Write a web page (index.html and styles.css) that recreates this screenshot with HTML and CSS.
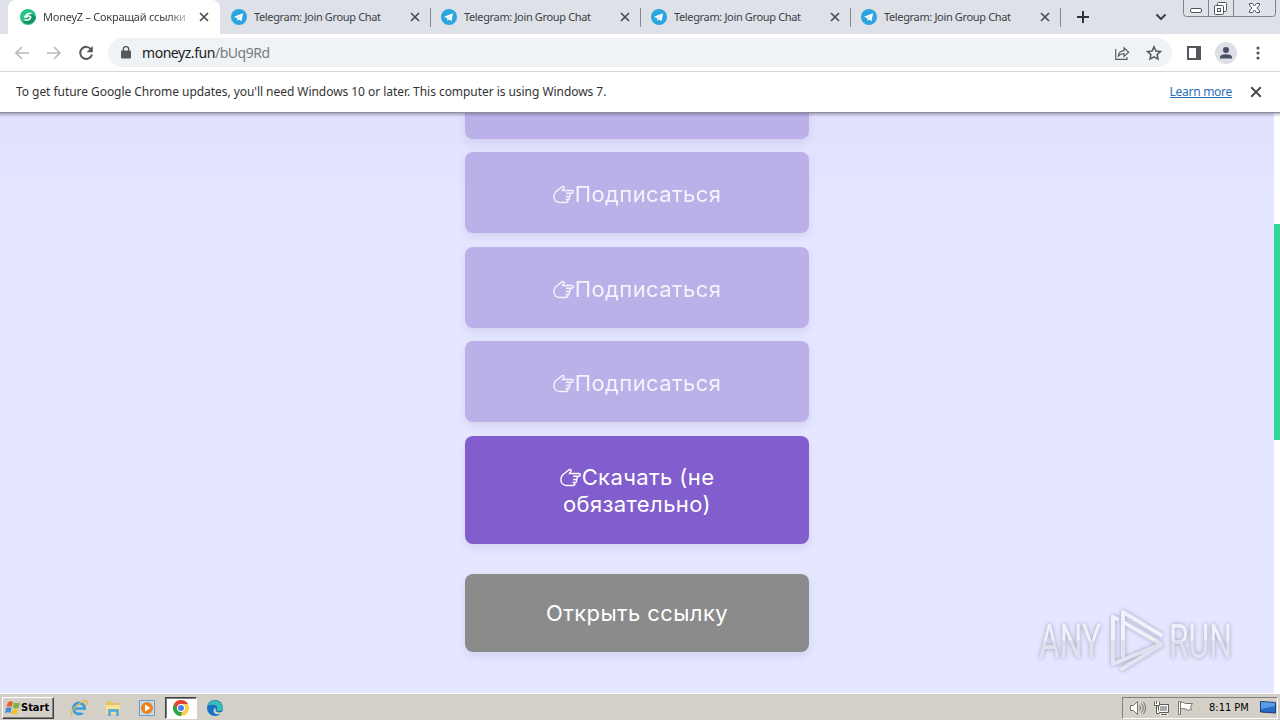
FILE: index.html
```html
<!DOCTYPE html>
<html lang="ru">
<head>
    <meta charset="UTF-8">
    <title>MoneyZ – Сокращай ссылки</title>
    <link rel="stylesheet" href="styles.css">
</head>
<body>
    <!-- shared icons -->
    <svg class="defs" width="0" height="0">
        <symbol id="telegram" viewBox="0 0 16 16">
            <circle cx="8" cy="8" r="8" fill="#2aa5df"/>
            <path d="M3 7.8l9-3.6-1.5 8-2.6-1.8-1.4 1.3-.3-2.4z" fill="#fff"/>
            <path d="M6.2 9.3l4.2-3.5-3.2 4.1-.7 1.8z" fill="#b9dcf0"/>
        </symbol>
        <symbol id="close" viewBox="0 0 10 10">
            <path d="M1 1l8 8M9 1L1 9" stroke="#45494d" stroke-width="1.6"/>
        </symbol>
        <symbol id="hand" viewBox="0 0 21 19">
            <path d="M8 17.500Q3 17.500 1.500 14.500Q0 10.500 2.500 7L9.500 1.500Q11.500 1 11 3L9.500 5.500H19q1.300 0 1.300 1.300T19 8.200h-6M17 8.500q1 3-1.500 3H13M16.500 11.700q.5 2.800-1.500 2.800h-2.500M15 14.700q0 2.800-2 2.800H8" fill="none" stroke="#fff" stroke-width="1.400"/>
        </symbol>
    </svg>

    <div class="tab-strip">
        <div class="tab active">
            <svg class="favicon" viewBox="0 0 16 16"><circle cx="8" cy="8" r="8" fill="#22c584"/><path d="M3 13A8 8 0 0 0 16 8L11 4z" fill="#159263"/><path d="M11.5 4.5H8L5.5 7H9q2 0 1.5 1.8T8 11H4.5M4 8h4" fill="none" stroke="#fff" stroke-width="1.7"/></svg>
            <span class="tab-title">MoneyZ – Сокращай ссылки</span>
            <svg class="tab-close"><use href="#close"/></svg>
        </div>
        <div class="tab">
            <svg class="favicon"><use href="#telegram"/></svg>
            <span class="tab-title">Telegram: Join Group Chat</span>
            <svg class="tab-close"><use href="#close"/></svg>
        </div>
        <div class="tab">
            <svg class="favicon"><use href="#telegram"/></svg>
            <span class="tab-title">Telegram: Join Group Chat</span>
            <svg class="tab-close"><use href="#close"/></svg>
        </div>
        <div class="tab">
            <svg class="favicon"><use href="#telegram"/></svg>
            <span class="tab-title">Telegram: Join Group Chat</span>
            <svg class="tab-close"><use href="#close"/></svg>
        </div>
        <div class="tab">
            <svg class="favicon"><use href="#telegram"/></svg>
            <span class="tab-title">Telegram: Join Group Chat</span>
            <svg class="tab-close"><use href="#close"/></svg>
        </div>
        <svg class="new-tab" width="12" height="12"><path d="M6 0v12M0 6h12" stroke="#30343a" stroke-width="2"/></svg>
        <svg class="tab-search" width="12" height="8"><path d="M1.5 1.5L6 6l4.5-4.5" fill="none" stroke="#3c4045" stroke-width="2"/></svg>
        <svg class="window-buttons" width="94" height="17" viewBox="0 0 94 17" fill="none" stroke="#7d828b">
            <path d="M.5-1V13.500q0 3 3 3H89.500q3 0 3-3V-1" fill="#dfe2e8"/>
            <path d="M25.500 0v16M50.500 0v16"/>
            <g stroke="#50545c">
                <rect x="7.500" y="8.500" width="11" height="4" rx="1.500" fill="#fff"/>
                <rect x="34.500" y="2.500" width="9" height="9" rx="1" fill="#fff"/>
                <rect x="31.500" y="5.500" width="9" height="9" rx="1" fill="#fff"/>
                <rect x="34.500" y="8.500" width="3" height="3"/>
                <path d="M66.500 3.500h3l2 2.500 2-2.500h3V5l-2.500 3 2.500 3v1.500h-3l-2-2.500-2 2.500h-3V11L69 8l-2.500-3z" fill="#fff"/>
            </g>
        </svg>
    </div>

    <div class="toolbar">
        <svg class="nav-icon" viewBox="0 0 16 16"><path d="M15 8H2M8 2L2 8l6 6" fill="none" stroke="#b8babd" stroke-width="1.700"/></svg>
        <svg class="nav-icon" viewBox="0 0 16 16"><path d="M1 8h13M8 2l6 6-6 6" fill="none" stroke="#b8babd" stroke-width="1.700"/></svg>
        <svg class="nav-icon" viewBox="0 0 16 16"><path d="M13.200 4.500A6 6 0 1 0 14 9.500" fill="none" stroke="#54585d" stroke-width="2"/><path d="M14.800 1v6.200H8.600z" fill="#54585d"/></svg>
        <div class="address-bar">
            <svg width="10" height="13" viewBox="0 0 10 13"><rect y="4.500" width="10" height="8" rx="1" fill="#54585d"/><path d="M2.300 5V3.300a2.700 2.700 0 0 1 5.400 0V5" fill="none" stroke="#54585d" stroke-width="1.400"/></svg>
            <span class="url"><b>moneyz.fun</b>/bUq9Rd</span>
            <svg class="share" width="16" height="16" viewBox="0 0 16 16" fill="none" stroke="#5b5f64" stroke-width="1.200"><path d="M1.700 4v10.300H13V12"/><path d="M4.300 11q.5-5 5.700-5.300V2.800l4.700 4.400L10 11.500V8.700Q6.500 8.500 4.300 11z"/></svg>
            <svg width="16" height="16" viewBox="0 0 16 16" fill="none" stroke="#54585d" stroke-width="1.500"><path d="M8 1.800l1.900 4.200 4.600.5-3.400 3.100.9 4.500L8 11.800l-4 2.300.9-4.500-3.400-3.100 4.600-.5z"/></svg>
        </div>
        <svg class="side-panel" width="14" height="14"><rect x="1" y="1" width="12" height="12" fill="#fff" stroke="#54585d" stroke-width="2"/><path d="M9 1h4v12H9z" fill="#54585d"/></svg>
        <svg class="profile" width="22" height="22"><circle cx="11" cy="11" r="11" fill="#dcdfe5"/><circle cx="11" cy="8" r="3" fill="#485068"/><path d="M5 16.500v-1.200q0-3 6-3t6 3v1.200z" fill="#485068"/></svg>
        <svg class="menu" width="4" height="14" fill="#54585d"><circle cx="2" cy="2" r="1.600"/><circle cx="2" cy="7" r="1.600"/><circle cx="2" cy="12" r="1.600"/></svg>
    </div>

    <div class="infobar">
        <span class="message">To get future Google Chrome updates, you'll need Windows 10 or later. This computer is using Windows 7.</span>
        <a class="learn-more">Learn more</a>
        <svg class="infobar-close" width="12" height="12"><use href="#close"/></svg>
    </div>

    <div class="page">
        <div class="links">
            <div class="btn locked"></div>
            <div class="btn locked"><span><svg class="hand"><use href="#hand"/></svg>Подписаться</span></div>
            <div class="btn locked"><span><svg class="hand"><use href="#hand"/></svg>Подписаться</span></div>
            <div class="btn locked"><span><svg class="hand"><use href="#hand"/></svg>Подписаться</span></div>
            <div class="btn download"><span><svg class="hand"><use href="#hand"/></svg>Скачать (не<br>обязательно)</span></div>
            <div class="btn open"><span>Открыть ссылку</span></div>
        </div>
        <div class="scrollbar"><div class="thumb"></div></div>
        <svg class="watermark" width="214" height="74" viewBox="0 0 214 74">
            <defs>
                <linearGradient id="shine" x1="0" y1="0" x2="0" y2="70" gradientUnits="userSpaceOnUse">
                    <stop offset=".5" stop-color="#f1f1fb"/>
                    <stop offset=".52" stop-color="#dfdfed"/>
                    <stop offset="1" stop-color="#e8e8f5"/>
                </linearGradient>
            </defs>
            <g fill="url(#shine)">
                <text x="5" y="53" textLength="62" lengthAdjust="spacingAndGlyphs">ANY</text>
                <text x="135" y="53" textLength="63" lengthAdjust="spacingAndGlyphs">RUN</text>
            </g>
            <path d="M83 14l-4-2v47l48-20L89 17M89 51V7l38 23M127 40L88 64" fill="none" stroke="url(#shine)" stroke-width="4" stroke-linejoin="round" stroke-linecap="round"/>
        </svg>
    </div>

    <div class="taskbar">
        <div class="start">
            <svg width="16" height="16" viewBox="0 0 16 16"><path d="M3 2q3-1.500 5 0L7 7Q5 5.500 1.500 7z" fill="#e8622c"/><path d="M9 2.500q3 1.500 6 0L13.500 8Q11 9 8 7.500z" fill="#7cb342"/><path d="M1.200 8q3-1.500 5.300 0L5.500 13Q3 11.500 0 13z" fill="#3c8ed8"/><path d="M7.600 8.500q3 1.500 5.600.5L12 14q-3 1-5.500-.5z" fill="#f6c12c"/></svg>
            <span>Start</span>
        </div>
        <div class="launchers">
            <div class="task"><svg viewBox="0 0 18 18"><circle cx="9" cy="9.500" r="5.500" fill="none" stroke="#3b9ede" stroke-width="3"/><path d="M5 9.500h9" stroke="#3b9ede" stroke-width="2.500"/><path d="M11 11h6v3h-6z" fill="#d4d0c8"/><path d="M2 16.500Q-1 13 7 6.500T17 2.500q.5 1.500-1.500 4" fill="none" stroke="#e5bb3c" stroke-width="1.300"/></svg></div>
            <div class="task"><svg viewBox="0 0 18 18"><path d="M2 3l5-1 1 2h8v8H2z" fill="#e4c467"/><path d="M2 6h14v9H2z" fill="#f5e391"/><path d="M4 17v-6q0-1 1-1h9q1 0 1 1v6h-3v-4H7v4z" fill="#62aeda"/></svg></div>
            <div class="task"><svg viewBox="0 0 18 18"><path d="M1.500 1.500h15v15h-15z" fill="#c8dcee" stroke="#6b9ac8"/><circle cx="9" cy="9" r="6" fill="#ee8020"/><path d="M7 5.500l5.500 3.500L7 12.500z" fill="#fff"/></svg></div>
            <div class="task current"><svg viewBox="0 0 18 18"><circle cx="9" cy="9" r="8" fill="#ffcd40"/><path d="M2.070 5A8 8 0 0 1 15.930 5H9L5.500 11z" fill="#e34133"/><path d="M2.070 5L6 11.500 10 12.500 9 17A8 8 0 0 1 2.070 5z" fill="#2ba24c"/><circle cx="9" cy="9" r="4" fill="#fff"/><circle cx="9" cy="9" r="3" fill="#4285f4"/></svg></div>
            <div class="task"><svg viewBox="0 0 18 18"><circle cx="9" cy="9" r="8" fill="#1673c6"/><path d="M1.500 7A8 8 0 0 1 17 9q0 3-4 3-3 0-2-2 1-4-3-4-4-1-6.500 1z" fill="#38bfb5"/><path d="M10 9q-2 4 3 4.500l3-.5 1 1-3 1Q8 16 7.500 12q0-3 2.500-3z" fill="#d4d0c8"/></svg></div>
        </div>
        <div class="tray">
            <svg width="17" height="16" viewBox="0 0 17 16" fill="none" stroke="#77736d"><path d="M1.500 5.500h3l4-4v13l-4-4h-3z" fill="#fff"/><path d="M10.500 5.500q2 2.500 0 5M12.500 3.500q3.500 4.500 0 9M14.500 2q4 6 0 12"/></svg>
            <svg width="17" height="16" viewBox="0 0 17 16" fill="none" stroke="#5f5c57"><path d="M5.500 4.500h10v8h-10z" fill="#aaa"/><path d="M6.500 5.500h8v6h-8z" stroke="#fff"/><path d="M1.500 1.500v4h5v-4M3.500 1v3M3.500 5.500v8h3" fill="#fff"/><path d="M7 14.500h8" stroke="#fff" stroke-width="2"/><path d="M8 14.500h6"/></svg>
            <svg width="17" height="16" viewBox="0 0 17 16" stroke="#77736d"><path d="M1.500 1.500h2v13h-2z" fill="#fff"/><path d="M3.500 2.500q3-1 5 1h7l-2 3 1 3q-4 2-6-.5-2-1-5 0z" fill="#fff"/></svg>
            <span class="clock">8:11 PM</span>
            <svg class="show-desktop" width="16" height="13" viewBox="0 0 16 13"><path d="M.5.500l15 1V12L.5 11z" fill="#276dc5" stroke="#1d3f75"/><path d="M1 1l14 1v3L1 8z" fill="#5b9be5"/></svg>
        </div>
    </div>
</body>
</html>
```
FILE: styles.css
```css
* {
    box-sizing: border-box;
}
body {
    margin: 0;
    width: 1280px;
    height: 720px;
    overflow: hidden;
    display: flex;
    flex-direction: column;
    font-family: "Noto Sans", "DejaVu Sans", sans-serif;
    background-color: #fff;
}
svg {
    flex-shrink: 0;
}
.defs {
    position: absolute;
}

/* browser tabs */
.tab-strip {
    display: flex;
    height: 34px;
    flex-shrink: 0;
    padding-left: 8px;
    background-color: #dee1e7;
}
.tab {
    display: flex;
    align-items: center;
    width: 210px;
    height: 34px;
    padding: 0 10px 0 11px;
    position: relative;
    font-size: 11px;
    color: #3c4045;
}
.tab.active {
    width: 212px;
    padding-left: 12px;
    padding-right: 11px;
    background-color: #fff;
    border-radius: 8px 8px 0 0;
}
.tab:not(.active)::after {
    content: "";
    position: absolute;
    right: -1px;
    top: 8px;
    width: 1px;
    height: 19px;
    background-color: #858992;
}
.favicon {
    width: 16px;
    height: 16px;
    margin-right: 7px;
}
.tab-title {
    flex: 1;
    overflow: hidden;
    white-space: nowrap;
    letter-spacing: -0.35px;
    padding-bottom: 2px;
}
.tab.active .tab-title {
    letter-spacing: -0.25px;
    -webkit-mask-image: linear-gradient(to right, #000 125px, transparent 152px);
    mask-image: linear-gradient(to right, #000 125px, transparent 152px);
}
.tab-close {
    width: 10px;
    height: 10px;
    margin-left: 9px;
}
.new-tab {
    margin: 11px 0 0 17px;
}
.tab-search {
    margin: 13px 0 0 auto;
}
.window-buttons {
    margin: 0 3px 0 16px;
}

/* toolbar */
.toolbar {
    display: flex;
    align-items: center;
    height: 38px;
    flex-shrink: 0;
    padding: 0 20px 0 14px;
    border-bottom: 1px solid #d5d7da;
}
.nav-icon {
    width: 16px;
    height: 16px;
    margin-right: 16px;
}
.address-bar {
    display: flex;
    align-items: center;
    width: 1064px;
    height: 29px;
    padding: 0 10px 0 13px;
    margin-left: -2px;
    border-radius: 15px;
    background-color: #f0f3f6;
}
.url {
    margin-left: 11px;
    font-size: 14px;
    letter-spacing: -0.45px;
    color: #777b80;
}
.url b {
    font-weight: normal;
    color: #202124;
}
.share {
    margin: 0 16px 0 auto;
}
.side-panel {
    margin-left: 15px;
}
.profile {
    margin-left: 14px;
}
.menu {
    margin-left: auto;
}

/* update notice */
.infobar {
    display: flex;
    align-items: center;
    height: 40px;
    flex-shrink: 0;
    padding: 0 18px 0 16px;
    font-size: 12px;
    color: #333;
}
.message {
    letter-spacing: -0.05px;
    padding-bottom: 2px;
}
.learn-more {
    margin-left: auto;
    padding-bottom: 2px;
    letter-spacing: -0.28px;
    color: #2a70b8;
    text-decoration: underline;
}
.infobar-close {
    margin-left: 18px;
}

/* page content */
.page {
    display: flex;
    height: 581px;
    flex-shrink: 0;
    position: relative;
    overflow: hidden;
    background: linear-gradient(#e1e0fd, #e5e6ff 90px);
    border-top: 1px solid #8e8e9a;
}
.page::before {
    content: "";
    position: absolute;
    z-index: 1;
    width: 100%;
    height: 4px;
    background: linear-gradient(rgba(60, 60, 80, 0.35), transparent);
}
.links {
    display: flex;
    flex-direction: column;
    gap: 13.5px;
    width: 344px;
    margin: -55.5px auto 0 465px;
}
.btn {
    display: flex;
    align-items: center;
    justify-content: center;
    height: 81px;
    flex-shrink: 0;
    padding-top: 4px;
    border-radius: 8px;
    color: #fff;
    font-family: Inter, "Noto Sans", sans-serif;
    font-size: 22px;
    line-height: 27px;
    letter-spacing: 0.4px;
    text-align: center;
    box-shadow: 0 4px 8px rgba(60, 50, 120, 0.1);
}
.btn.locked {
    background-color: #bcb0e9;
}
.btn.locked span {
    opacity: 0.85;
}
.btn.download {
    height: 108px;
    padding-top: 2px;
    background-color: #825dcd;
}
.btn.open {
    height: 78px;
    margin-top: 16.5px;
    padding-top: 2px;
    background-color: #8b8b8b;
}
.hand {
    width: 21px;
    height: 19px;
    margin-right: 1px;
    vertical-align: -2px;
}
.scrollbar {
    width: 6px;
    padding-top: 111px;
    background-color: #fff;
}
.thumb {
    height: 216px;
    background-color: #30d795;
}
.watermark {
    position: absolute;
    left: 1034px;
    top: 492px;
    font-family: Roboto, sans-serif;
    font-size: 49px;
    filter: drop-shadow(0 0 2px rgba(90, 90, 120, 0.5));
}

/* taskbar */
.taskbar {
    display: flex;
    align-items: center;
    height: 27px;
    flex-shrink: 0;
    padding: 1px 2px 0;
    border-top: 1px solid #fff;
    background-color: #d4d0c8;
}
.start {
    display: flex;
    align-items: center;
    width: 52px;
    height: 22px;
    padding-left: 2px;
    border: 1px solid;
    border-color: #fff #404040 #404040 #fff;
    box-shadow: inset -1px -1px #808080;
    font: bold 11px "DejaVu Sans Condensed", "DejaVu Sans", sans-serif;
}
.launchers {
    display: flex;
    gap: 2px;
    margin-left: 9px;
}
.task {
    display: flex;
    align-items: center;
    justify-content: center;
    width: 32px;
    height: 22px;
}
.task svg {
    width: 18px;
    height: 18px;
}
.task.current {
    background-color: #fff;
    border: 1px solid;
    border-color: #404040 #fff #fff #404040;
    box-shadow: inset 1px 1px #808080;
}
.tray {
    display: flex;
    align-items: center;
    gap: 7px;
    width: 156px;
    height: 22px;
    margin-left: auto;
    padding-left: 6px;
    border: 1px solid;
    border-color: #808080 #fff #fff #808080;
}
.clock {
    margin-left: 8px;
    font: 11px "DejaVu Sans Condensed", "DejaVu Sans", sans-serif;
    white-space: nowrap;
}
.show-desktop {
    margin-left: 4px;
}
```
